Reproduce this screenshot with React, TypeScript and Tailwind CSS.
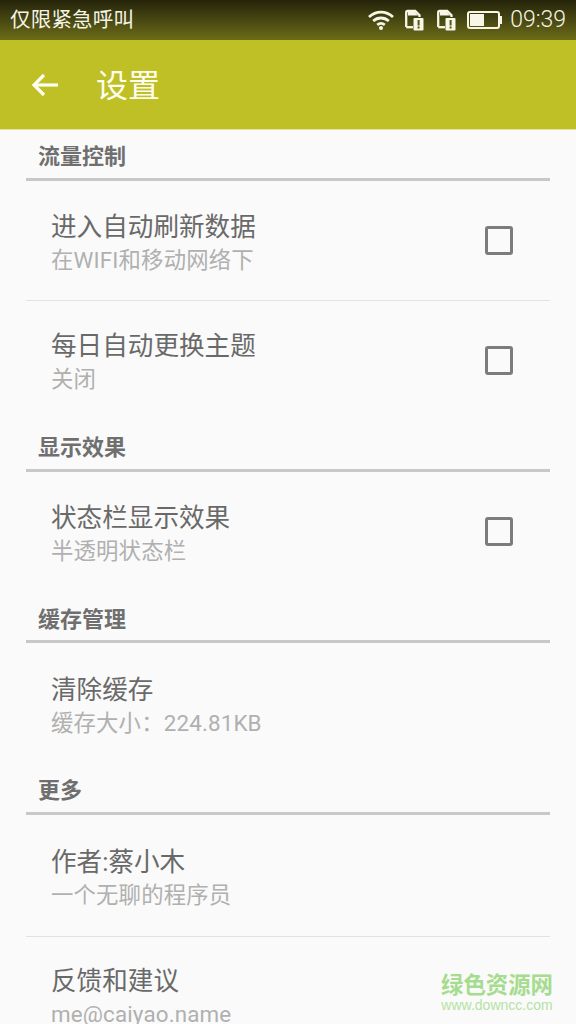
import React from "react";

const font = { fontFamily: 'Roboto, "Noto Sans CJK SC", "Noto Sans", sans-serif' };

function Sim() {
  return (
    <svg width="19" height="22" viewBox="0 0 19 22" fill="none" className="shrink-0">
      <path d="M1.200 18V3.500a1.500 1.500 0 0 1 1.500-1.500h7.500l4.300 4.300V8" stroke="#f7f7e8" strokeWidth="2.300" />
      <path d="M1.200 18.200H8" stroke="#f7f7e8" strokeWidth="2.300" />
      <path d="M3 3h7l3 3.500H3z" fill="#f7f7e8" />
      <rect x="8.500" y="9" width="10" height="12.500" rx="1" fill="#f7f7e8" />
      <rect x="12.600" y="11" width="2" height="5.500" fill="#55550f" />
      <rect x="12.600" y="17.500" width="2" height="2" fill="#55550f" />
    </svg>
  );
}

function Check() {
  return <div className="w-[28px] h-[29px] rounded-[3px] border-[3px] border-[#7c7c7c] shrink-0" />;
}

function Section({ title, tall, low }: { title: string; tall?: boolean; low?: boolean }) {
  return (
    <div className={"mx-[26px] border-b-[3px] border-[#c8c8c8] pl-[12px] " + (tall ? "h-[52px] " : "h-[51px] ") + (low ? "pt-[11px]" : "pt-[10px]")}>
      <div className="text-[22px] leading-[34px] font-bold text-[#6f6f6f]">{title}</div>
    </div>
  );
}

function Item({ title, sub, check, divider, textTop = "pt-[28px]", tall }: { title: string; sub: string; check?: boolean; divider?: boolean; textTop?: string; tall?: boolean }) {
  return (
    <div className={"mx-[26px] pl-[25px] pr-[37px] flex items-start justify-between " + (tall ? "h-[122px] " : "h-[120px] ") + (divider ? "border-b border-[#e2e2e2]" : "")}>
      <div className={textTop}>
        <div className="text-[25.600px] leading-[36px] text-[#696969] whitespace-nowrap">{title}</div>
        <div className="text-[22.400px] leading-[32px] text-[#b0b0b0] whitespace-nowrap mt-[-1px] tracking-[0.15px]">{sub}</div>
      </div>
      {check && <div className="pt-[45px]"><Check /></div>}
    </div>
  );
}

export default function App() {
  return (
    <div className="relative w-[576px] h-[1024px] overflow-hidden bg-[#fafafa]" style={font}>
      <div className="h-[40px] pl-[10px] pr-[10px] flex items-center justify-between bg-gradient-to-b from-[#25240a] to-[#6d6d18] text-[#f4f4e6]">
        <div className="text-[20.500px] leading-[40px] tracking-[0.2px]">仅限紧急呼叫</div>
        <div className="flex items-center">
          <svg width="26" height="20" viewBox="0 0 26 20" fill="none" stroke="#f7f7e8" strokeWidth="2.800" className="mr-[11px] shrink-0">
            <path d="M1 7c7-6.500 17-6.500 24 0" />
            <path d="M5.200 11c4.500-4 11-4 15.600 0" />
            <path d="M9.200 14.800c2.200-1.600 5.400-1.600 7.600 0" />
            <circle cx="13" cy="18" r="2" fill="#f7f7e8" stroke="none" />
          </svg>
          <Sim />
          <div className="w-[13px]" />
          <Sim />
          <div className="w-[11px]" />
          <div className="w-[33px] h-[18px] border-2 border-[#f7f7e8] rounded-[3px] flex items-center p-[1px]">
            <div className="w-[14px] h-[12px] bg-[#f7f7e8]" />
          </div>
          <div className="w-[2px] h-[8px] bg-[#f7f7e8] mr-[8px]" />
          <div className="text-[23px] leading-[40px] font-light">09:39</div>
        </div>
      </div>
      <div className="h-[90px] bg-[#bfc026] border-b border-[#e4e49a] flex items-center pl-[30px]">
        <svg width="30" height="30" viewBox="0 0 30 30" fill="none" stroke="#fdfdf0" strokeWidth="3.200">
          <path d="M28 15H4" />
          <path d="M14 5L4 15l10 10" />
        </svg>
        <div className="ml-[36px] pt-[2px] text-[32px] leading-[40px] text-[#fdfdf0]">设置</div>
      </div>
      <Section title="流量控制" />
      <Item title="进入自动刷新数据" sub="在WIFI和移动网络下" check divider />
      <Item title="每日自动更换主题" sub="关闭" check textTop="pt-[27px]" />
      <Section title="显示效果" />
      <Item title="状态栏显示效果" sub="半透明状态栏" check />
      <Section title="缓存管理" low />
      <Item title="清除缓存" sub="缓存大小：224.81KB" textTop="pt-[29px]" />
      <Section title="更多" tall low />
      <Item title="作者:蔡小木" sub="一个无聊的程序员" divider tall textTop="pt-[29px]" />
      <Item title="反馈和建议" sub="me@caiyao.name" textTop="pt-[26px]" />
      <div className="absolute left-[440px] top-[971px] w-[114px] text-center">
        <div className="text-[22.400px] leading-[28px] font-bold text-[#a6dc8e] whitespace-nowrap">绿色资源网</div>
        <div className="text-[14px] leading-[12px] text-[#b5e2a4] whitespace-nowrap" style={{ fontFamily: '"Liberation Sans", sans-serif' }}>www.downcc.com</div>
      </div>
    </div>
  );
}
